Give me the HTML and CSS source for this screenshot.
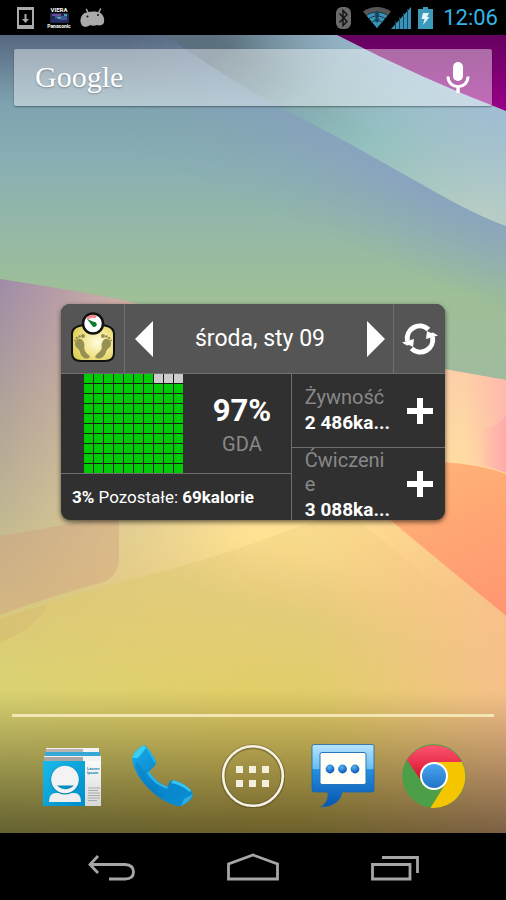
FILE: index.html
```
<!DOCTYPE html>
<html lang="pl">
  <head>
    <meta charset="UTF-8">
    <meta name="viewport" content="width=device-width, initial-scale=1">
    <title>Home</title>
    <link rel="stylesheet" href="styles.css">
  </head>
  <body>
    <header class="status-bar">
      <svg class="status-icon" width="17" height="24" viewBox="0 0 17 24" aria-hidden="true">
        <path d="M0 1h17v22H0zM2 4v15h13V4z" fill="#aaa" fill-rule="evenodd"/>
        <path d="M7.500 8h2v5h2.500l-3.500 4-3.500-4h2.500z" fill="#aaa"/>
      </svg>
      <span class="status-viera">
        <span class="viera-title">VIERA</span>
        <svg width="19" height="10" viewBox="0 0 19 10" aria-hidden="true">
          <rect width="19" height="10" fill="#20264a"/>
          <path d="M2 1h9v2H2z" fill="#6b4f94"/>
          <path d="M5 3h12v4H5z" fill="#3b5792"/>
          <path d="M7 4h4v2H7zM14 1h3v2h-3z" fill="#47a3ac"/>
          <path d="M1 7l5-2 12 4H2z" fill="#252f69"/>
        </svg>
        <span class="viera-brand">Panasonic</span>
      </span>
      <svg class="status-icon" width="25" height="19" viewBox="0 0 25 19" aria-hidden="true">
        <path d="M6.500 1.500l2 4M20.500 1l-2 4" stroke="#aaa" stroke-width="1.500" stroke-linecap="round"/>
        <path d="M.5 12C1 8 3 5 7 4.500c4-1.500 10-1.500 13.500.5 3.500 2 4.500 8 3 10.500-2 2.500-5 2-6.500 1.500-2 1-5 1-7 0-2 2-6 2.500-8 .500C1 16 .2 14 .5 12z" fill="#aaa"/>
        <circle cx="7.500" cy="8.500" r="1" fill="#111"/>
        <circle cx="18" cy="7" r="1" fill="#111"/>
      </svg>
      <span class="status-spacer"></span>
      <svg class="status-icon icon-bluetooth" width="15" height="22" viewBox="0 0 15 22" aria-hidden="true">
        <rect width="15" height="22" rx="6" fill="#6b6b6b"/>
        <path d="M3.500 6.500l7.500 8-4 4v-15l4 4-7.500 8" fill="none" stroke="#111" stroke-width="1.400"/>
      </svg>
      <svg class="status-icon" width="28" height="21" viewBox="0 0 28 21" aria-hidden="true">
        <path d="M14 21L0 4.500C8-1.500 20-1.500 28 4.500z" fill="#555"/>
        <path d="M14 21L3.500 8.500C9 4 19 4 24.500 8.500z" fill="#3793b8"/>
        <path d="M3.500 8.500C9 4 19 4 24.500 8.500M5.500 12c5-4 12-4 17 0M8.500 15.500c3.500-2.500 7.500-2.500 11 0" fill="none" stroke="#12384a"/>
        <path d="M14 4l3 4h-1.500v4H17l-3 4-3-4h1.500V8H11z" fill="#12384a" opacity=".8"/>
      </svg>
      <svg class="status-icon" width="20" height="22" viewBox="0 0 20 22" aria-hidden="true">
        <path d="M0 22L20 0v22z" fill="#3793b8"/>
        <path d="M4.500 14v8M8.500 10v12M12.500 6v16M16.500 2v20" stroke="#174459" stroke-width="1"/>
      </svg>
      <svg class="status-icon icon-battery" width="15" height="22" viewBox="0 0 15 22" aria-hidden="true">
        <path d="M5 0h5v2h5v20H0V2h5z" fill="#3c9abb"/>
        <path d="M5 6h6L9 10h2.500L5 18l1.500-6H3.500z" fill="#e6f4fa"/>
      </svg>
      <time class="clock">12:06</time>
    </header>

    <main class="home">
      <svg class="wallpaper" viewBox="0 35 506 798" preserveAspectRatio="none" aria-hidden="true">
        <defs>
          <linearGradient id="sky" x1="0" y1="35" x2="0" y2="380" gradientUnits="userSpaceOnUse">
            <stop offset="0" stop-color="#56677f"/>
            <stop offset=".2" stop-color="#7fa3b0"/>
            <stop offset=".38" stop-color="#8aafb3"/>
            <stop offset=".58" stop-color="#95b9a6"/>
            <stop offset=".75" stop-color="#9ebf97"/>
            <stop offset="1" stop-color="#a0bb9e"/>
          </linearGradient>
          <linearGradient id="sky-blue" x1="440" y1="190" x2="405" y2="270" gradientUnits="userSpaceOnUse">
            <stop offset="0" stop-color="#889fc4"/>
            <stop offset="1" stop-color="#889fc4" stop-opacity="0"/>
          </linearGradient>
          <linearGradient id="sky-fade" x1="120" y1="0" x2="420" y2="0" gradientUnits="userSpaceOnUse">
            <stop offset="0" stop-color="#fff" stop-opacity="0"/>
            <stop offset="1" stop-color="#fff" stop-opacity=".8"/>
          </linearGradient>
          <mask id="sky-mask">
            <rect y="35" width="506" height="360" fill="url(#sky-fade)"/>
          </mask>
          <linearGradient id="ray" x1="240" y1="35" x2="430" y2="260" gradientUnits="userSpaceOnUse">
            <stop offset="0" stop-color="#5c7180"/>
            <stop offset=".3" stop-color="#84aab0"/>
            <stop offset=".55" stop-color="#93c0bf"/>
            <stop offset="1" stop-color="#b8cdc4"/>
          </linearGradient>
          <linearGradient id="ray-blue" x1="430" y1="180" x2="490" y2="90" gradientUnits="userSpaceOnUse">
            <stop offset="0" stop-color="#a0bcd6" stop-opacity="0"/>
            <stop offset="1" stop-color="#a0bcd6"/>
          </linearGradient>
          <linearGradient id="violet" x1="0" y1="35" x2="0" y2="110" gradientUnits="userSpaceOnUse">
            <stop offset="0" stop-color="#66005f"/>
            <stop offset="1" stop-color="#990088"/>
          </linearGradient>
          <linearGradient id="sand" x1="0" y1="279" x2="0" y2="833" gradientUnits="userSpaceOnUse">
            <stop offset="0" stop-color="#a08ca8"/>
            <stop offset=".22" stop-color="#b0a29a"/>
            <stop offset=".4" stop-color="#beb494"/>
            <stop offset=".6" stop-color="#d6c884"/>
            <stop offset=".74" stop-color="#d8d77c"/>
            <stop offset="1" stop-color="#b9bd5e"/>
          </linearGradient>
          <linearGradient id="sun" x1="0" y1="370" x2="0" y2="833" gradientUnits="userSpaceOnUse">
            <stop offset="0" stop-color="#fdcfa8"/>
            <stop offset=".2" stop-color="#ffdca2"/>
            <stop offset=".36" stop-color="#ffe292"/>
            <stop offset=".5" stop-color="#f3d183"/>
            <stop offset=".7" stop-color="#e1cd69"/>
            <stop offset="1" stop-color="#d4b64b"/>
          </linearGradient>
          <linearGradient id="sun-fade" x1="0" y1="0" x2="250" y2="0" gradientUnits="userSpaceOnUse">
            <stop offset="0" stop-color="#fff" stop-opacity="0"/>
            <stop offset="1" stop-color="#fff"/>
          </linearGradient>
          <mask id="sun-mask">
            <rect y="35" width="506" height="798" fill="url(#sun-fade)"/>
          </mask>
          <linearGradient id="meadow" x1="260" y1="545" x2="220" y2="690" gradientUnits="userSpaceOnUse">
            <stop offset="0" stop-color="#e8c97c" stop-opacity=".3"/>
            <stop offset=".4" stop-color="#dcca76" stop-opacity=".7"/>
            <stop offset="1" stop-color="#dfcc64" stop-opacity=".4"/>
          </linearGradient>
          <linearGradient id="coral" x1="430" y1="460" x2="506" y2="610" gradientUnits="userSpaceOnUse">
            <stop offset="0" stop-color="#ffb377"/>
            <stop offset="1" stop-color="#ff9670"/>
          </linearGradient>
          <linearGradient id="pink-glow" x1="465" y1="0" x2="506" y2="0" gradientUnits="userSpaceOnUse">
            <stop offset="0" stop-color="#ffb9a8" stop-opacity="0"/>
            <stop offset="1" stop-color="#ffb9ae"/>
          </linearGradient>
          <linearGradient id="pink" x1="480" y1="0" x2="506" y2="0" gradientUnits="userSpaceOnUse">
            <stop offset="0" stop-color="#ffa6aa" stop-opacity="0"/>
            <stop offset="1" stop-color="#ffa6aa"/>
          </linearGradient>
          <linearGradient id="peach" x1="310" y1="0" x2="520" y2="0" gradientUnits="userSpaceOnUse">
            <stop offset="0" stop-color="#fcc686" stop-opacity="0"/>
            <stop offset="1" stop-color="#f8bf8c"/>
          </linearGradient>
          <linearGradient id="shade" x1="0" y1="690" x2="0" y2="833" gradientUnits="userSpaceOnUse">
            <stop offset="0" stop-opacity="0"/>
            <stop offset="1" stop-opacity=".5"/>
          </linearGradient>
        </defs>
        <rect y="35" width="506" height="360" fill="url(#sky)"/>
        <rect y="35" width="506" height="360" fill="url(#sky-blue)" mask="url(#sky-mask)"/>
        <path d="M165 35Q225 78 290 112L350 144L430 189Q475 215 506 226V35z" fill="url(#ray)"/>
        <path d="M165 35Q225 78 290 112L350 144L430 189Q475 215 506 226V35z" fill="url(#ray-blue)"/>
        <path d="M337 35Q420 78 506 111V35z" fill="url(#violet)"/>
        <path d="M0 279Q60 288 123 300Q300 345 445 369L506 380V833H0z" fill="url(#sand)"/>
        <path d="M0 279Q60 288 123 300Q300 345 445 369L506 380V833H0z" fill="url(#sun)" mask="url(#sun-mask)"/>
        <path d="M0 536Q70 525 119 512V560Q118 575 104 582Q50 596 0 615z" fill="#cf987f" opacity=".36"/>
        <path d="M0 618L48 604Q35 630 0 642z" fill="#c9957c" opacity=".28"/>
        <path d="M0 617Q60 598 120 582Q180 568 240 548L345 510L506 640V833H0z" fill="url(#meadow)"/>
        <path d="M460 372L506 380V473Q480 464 460 463z" fill="url(#pink-glow)"/>
        <path d="M480 432Q500 425 506 415V473L480 463z" fill="url(#pink)" opacity=".7"/>
        <path d="M440 462Q480 464 506 474V616Q450 570 390 520z" fill="url(#coral)"/>
        <path d="M300 519H390Q450 570 506 616V833H300z" fill="url(#peach)"/>
        <rect y="690" width="506" height="143" fill="url(#shade)"/>
      </svg>

      <div class="search-bar">
        <a class="search-logo" href="#">Google</a>
        <button class="voice-button" type="button" aria-label="Voice search">
          <svg width="24" height="34" viewBox="0 0 24 34" aria-hidden="true">
            <rect x="7" y="1" width="10" height="19" rx="5" fill="#fff"/>
            <path d="M2 15.500C2 29 22 29 22 15.500" fill="none" stroke="#fff" stroke-width="3"/>
            <path d="M10.300 25h3.400v7h-3.400z" fill="#fff"/>
          </svg>
        </button>
      </div>

      <section class="widget">
        <div class="widget-head">
          <button class="widget-app" type="button" aria-label="Waga">
            <svg width="46" height="54" viewBox="0 0 46 54" aria-hidden="true">
              <defs>
                <radialGradient id="scale-body" cx=".6" cy=".5" r=".65">
                  <stop offset="0" stop-color="#fffce0"/>
                  <stop offset=".55" stop-color="#f1e58b"/>
                  <stop offset="1" stop-color="#dccd52"/>
                </radialGradient>
              </defs>
              <path d="M9 14Q23 10 37 14Q44 16 44 22V41Q44 49 35 49H11Q2 49 2 41V22Q2 16 9 14z" fill="url(#scale-body)" stroke="#111" stroke-width="2"/>
              <circle cx="23" cy="11.500" r="10" fill="#fff" stroke="#111" stroke-width="2.500"/>
              <path d="M17 6.500Q22 3 26 5" fill="none" stroke="#f2888b" stroke-width="3"/>
              <path d="M17 7l7 3a2.500 2.500 0 1 1-2 3.500z" fill="#087b2f"/>
              <g fill="#969052">
                <path d="M5 32C5 27 11 25 13 29C16 33 13 35 15 39C17 43 22 44 19 46C14 48 11 44 10 40C9 36 5 36 5 32z"/>
                <path d="M41 32C41 27 35 25 33 29C30 33 33 35 31 38C29 41 23 44 26 46C31 48 35 44 36 40C37 36 41 36 41 32z"/>
                <circle cx="13" cy="24" r="2"/><circle cx="9.500" cy="24.500" r="1.300"/><circle cx="6.800" cy="26" r="1.200"/><circle cx="5" cy="28.500" r="1"/>
                <circle cx="33" cy="24" r="2"/><circle cx="36.500" cy="24.500" r="1.300"/><circle cx="39.200" cy="26" r="1.200"/><circle cx="41" cy="28.500" r="1"/>
              </g>
            </svg>
          </button>
          <div class="widget-date">
            <button class="arrow" type="button" aria-label="Poprzedni">
              <svg width="18" height="36" viewBox="0 0 18 36" aria-hidden="true"><path d="M18 0v36L0 18z" fill="#fff"/></svg>
            </button>
            <span>środa, sty 09</span>
            <button class="arrow" type="button" aria-label="Następny">
              <svg width="18" height="36" viewBox="0 0 18 36" aria-hidden="true"><path d="M0 0v36l18-18z" fill="#fff"/></svg>
            </button>
          </div>
          <button class="widget-refresh" type="button" aria-label="Odśwież">
            <svg width="36" height="34" viewBox="0 0 36 32" aria-hidden="true">
              <path d="M5.500 18A12.500 12.500 0 0 1 26.500 6.500" fill="none" stroke="#fff" stroke-width="5"/>
              <path d="M30.500 14A12.500 12.500 0 0 1 9.500 25.500" fill="none" stroke="#fff" stroke-width="5"/>
              <path d="M0 19.500l12-3.500-1 8-4-2-2 .5z" fill="#fff"/>
              <path d="M36 12.500L24 16l1-8 4 2 2-.5z" fill="#fff"/>
            </svg>
          </button>
        </div>

        <div class="widget-body">
          <div class="summary">
            <div class="gda">
              <svg class="gda-grid" width="100" height="99" viewBox="0 0 100 99" role="img" aria-label="97%">
                <defs>
                  <pattern id="cell" width="10" height="10" patternUnits="userSpaceOnUse">
                    <rect width="10" height="10" fill="#191b19"/>
                    <rect width="9" height="9" fill="#00cc05"/>
                  </pattern>
                  <pattern id="cell-empty" width="10" height="10" patternUnits="userSpaceOnUse">
                    <rect width="10" height="10" fill="#191b19"/>
                    <rect width="9" height="9" fill="#ccc"/>
                  </pattern>
                </defs>
                <rect width="99" height="99" fill="url(#cell)"/>
                <rect x="70" width="29" height="10" fill="url(#cell-empty)"/>
              </svg>
              <div class="gda-text">
                <strong class="gda-value">97%</strong>
                <span class="gda-label">GDA</span>
              </div>
            </div>
            <p class="remaining"><b>3%</b> Pozostałe: <b>69kalorie</b></p>
          </div>
          <div class="entries">
            <div class="entry">
              <div class="entry-text">
                <span class="entry-label">Żywność</span>
                <strong class="entry-value">2 486ka...</strong>
              </div>
              <button class="add-button" type="button" aria-label="Dodaj żywność">
                <svg width="26" height="26" viewBox="0 0 26 26" aria-hidden="true"><path d="M10 0h6v10h10v6H16v10h-6V16H0v-6h10z" fill="#fff"/></svg>
              </button>
            </div>
            <div class="entry">
              <div class="entry-text">
                <span class="entry-label">Ćwiczenie</span>
                <strong class="entry-value">3 088ka...</strong>
              </div>
              <button class="add-button" type="button" aria-label="Dodaj ćwiczenie">
                <svg width="26" height="26" viewBox="0 0 26 26" aria-hidden="true"><path d="M10 0h6v10h10v6H16v10h-6V16H0v-6h10z" fill="#fff"/></svg>
              </button>
            </div>
          </div>
        </div>
      </section>

      <nav class="dock">
        <a href="#" aria-label="Kontakty">
          <svg width="64" height="64" viewBox="0 0 64 64" aria-hidden="true">
            <defs>
              <linearGradient id="card-blue" x1="0" y1="0" x2="1" y2="1">
                <stop offset="0" stop-color="#19bae8"/>
                <stop offset="1" stop-color="#008cc9"/>
              </linearGradient>
              <linearGradient id="paper" x1="0" y1="0" x2="0" y2="1">
                <stop offset="0" stop-color="#fafafa"/>
                <stop offset="1" stop-color="#d8d8d8"/>
              </linearGradient>
            </defs>
            <path d="M6 4h53v4H6z" fill="#f2f2f2"/>
            <path d="M6 5h37v3H6z" fill="#bab4b0"/>
            <path d="M5 8h55v4H5z" fill="#37a7d6"/>
            <path d="M4 12h57v5H4z" fill="#f2f2f2"/>
            <path d="M4 13h39v4H4z" fill="#aaa5a2"/>
            <path d="M3 17h42v45H3z" fill="url(#card-blue)"/>
            <path d="M45 17h16v45H45z" fill="url(#paper)"/>
            <path d="M9 58Q9 49 16 49H34Q41 49 41 58z" fill="#eee"/>
            <circle cx="25" cy="36" r="14.500" fill="#0787b8"/>
            <circle cx="25" cy="35.500" r="13.800" fill="#f3f3f3"/>
            <path d="M17 41.500h17Q25.500 49 17 41.500z" fill="#078dbd"/>
            <path d="M48 44h12M48 46.500h10M48 49h12M48 51.500h12M48 54h12M48 56.500h9" stroke="#aaa"/>
            <text class="card-text" x="47" y="26">Lauren</text>
            <text class="card-text" x="47" y="30">Ipsum</text>
          </svg>
        </a>
        <a href="#" aria-label="Telefon">
          <svg width="64" height="64" viewBox="0 0 64 64" aria-hidden="true">
            <defs>
              <linearGradient id="phone" x1="0" y1="0" x2="1" y2="1">
                <stop offset="0" stop-color="#18aeea"/>
                <stop offset=".5" stop-color="#0783c8"/>
                <stop offset="1" stop-color="#0a8fd4"/>
              </linearGradient>
            </defs>
            <path d="M1 14Q3 6 13 1Q16 2 25 17Q26 22 18 27Q24 38 37 43Q38 36 42 36Q51 38 60 46L62 51Q60 58 50 62H46Q30 58 16 43Q2 28 1 14z" fill="url(#phone)"/>
            <path d="M1 14Q4 6 13 1L15 4L7 14z" fill="#39cef4"/>
            <path d="M13 1Q17 3 25 17L24 20L15 4z" fill="#20b3e9"/>
            <path d="M42 36Q51 38 60 46L59 48Q49 40 40 39z" fill="#35c6f2"/>
            <path d="M18 27Q24 38 37 43L36 45Q22 40 16 29z" fill="#2eb4e8"/>
            <path d="M62 50Q60 57 50 62L53 55z" fill="#28aee5"/>
            <path d="M6 18L14 28Q12 32 18 40T33 52L30 54Q10 41 4 22z" fill="#0a76b8" opacity=".35"/>
          </svg>
        </a>
        <a href="#" aria-label="Aplikacje">
          <svg width="64" height="64" viewBox="0 0 64 64" aria-hidden="true">
            <circle cx="32" cy="32.500" r="29.800" fill="none" stroke="#4d4218" stroke-opacity=".4" stroke-width="5"/>
            <circle cx="32" cy="32" r="29.800" fill="none" stroke="#f5f2e6" stroke-width="2.600"/>
            <path d="M15 22h7v7h-7zM28 22h7v7h-7zM41 22h7v7h-7zM15 36h7v7h-7zM28 36h7v7h-7zM41 36h7v7h-7z" fill="#f3efdc"/>
          </svg>
        </a>
        <a href="#" aria-label="Wiadomości">
          <svg width="64" height="64" viewBox="0 0 64 64" aria-hidden="true">
            <defs>
              <linearGradient id="bubble" x1="0" y1="0" x2="0" y2="64" gradientUnits="userSpaceOnUse">
                <stop offset="0" stop-color="#b8e4fd"/>
                <stop offset=".39" stop-color="#68bdf1"/>
                <stop offset=".4" stop-color="#268fe0"/>
                <stop offset="1" stop-color="#0751ae"/>
              </linearGradient>
              <radialGradient id="dot" cx=".4" cy=".3" r=".7">
                <stop offset="0" stop-color="#57b5f3"/>
                <stop offset="1" stop-color="#0755b5"/>
              </radialGradient>
            </defs>
            <path d="M3 0.500H61Q63 .5 63 2.500V46Q63 48 61 48H31Q29 62 10 63Q18 58 17 48H3Q1 48 1 46V2.500Q1 .5 3 .5z" fill="url(#bubble)" stroke="#1767ab" stroke-width=".8"/>
            <rect x="9" y="8.500" width="46" height="32" rx="2" fill="#fffff8" stroke="#2676b8"/>
            <circle cx="19" cy="25" r="4.400" fill="url(#dot)"/>
            <circle cx="31.500" cy="25" r="4.400" fill="url(#dot)"/>
            <circle cx="44" cy="25" r="4.400" fill="url(#dot)"/>
          </svg>
        </a>
        <a href="#" aria-label="Chrome">
          <svg width="64" height="64" viewBox="0 0 64 64" aria-hidden="true">
            <defs>
              <linearGradient id="red" x1="0" y1="0" x2="0" y2="1">
                <stop offset="0" stop-color="#ff5470"/>
                <stop offset="1" stop-color="#d4102b"/>
              </linearGradient>
              <linearGradient id="chrome-blue" x1="0" y1="0" x2="0" y2="1">
                <stop offset="0" stop-color="#4aa5ef"/>
                <stop offset="1" stop-color="#2274c8"/>
              </linearGradient>
            </defs>
            <circle cx="32" cy="32" r="31.800" fill="#4c9e48"/>
            <path d="M5 16A31.800 31.800 0 0 1 60 18H32L18 35z" fill="url(#red)"/>
            <path d="M32 18H60A31.800 31.800 0 0 1 28.500 63.800L44 39z" fill="#f5c600"/>
            <circle cx="32" cy="32" r="14" fill="#fff"/>
            <circle cx="32" cy="32" r="12" fill="url(#chrome-blue)"/>
          </svg>
        </a>
      </nav>
    </main>

    <footer class="nav-bar">
      <button type="button" aria-label="Wstecz">
        <svg width="52" height="30" viewBox="0 0 52 30" fill="none" stroke="#a6a6a6" stroke-width="2.800" aria-hidden="true">
          <path d="M13 4L5 12.500L13 21M5 12.500H40Q48.500 13 48.500 20T40 27H24"/>
        </svg>
      </button>
      <button type="button" aria-label="Ekran główny">
        <svg width="52" height="30" viewBox="0 0 52 30" fill="none" stroke="#a6a6a6" stroke-width="2.800" aria-hidden="true">
          <path d="M1.500 27V12L26 3L50.500 12V27z"/>
        </svg>
      </button>
      <button type="button" aria-label="Ostatnie aplikacje">
        <svg width="52" height="30" viewBox="0 0 52 30" fill="none" stroke="#a6a6a6" stroke-width="2.800" aria-hidden="true">
          <path d="M3.500 12.500H41V27H3.500zM13 5.500H48.500V21"/>
        </svg>
      </button>
    </footer>
  </body>
</html>
```
FILE: styles.css
```
:root {
  --holo-blue: #33b5e5;
  --line: #6e6e6e;
}
* {
  box-sizing: border-box;
}
body {
  display: flex;
  flex-direction: column;
  min-height: 100vh;
  margin: 0;
  background: black;
  font-family: Roboto, "Noto Sans", sans-serif;
  color: white;
}
button {
  display: flex;
  align-items: center;
  justify-content: center;
  padding: 0;
  border: 0;
  background: none;
  color: inherit;
  font: inherit;
}
svg {
  display: block;
  flex: none;
}

/* status bar */
.status-bar {
  display: flex;
  align-items: center;
  height: 35px;
  padding: 0 8px 0 17px;
}
.status-viera {
  display: flex;
  flex-direction: column;
  align-items: center;
  width: 24px;
  margin: 0 9px 0 13px;
}
.viera-title {
  font-size: 6px;
  font-weight: bold;
  line-height: 6px;
}
.viera-brand {
  font-size: 5px;
  font-weight: bold;
  line-height: 6px;
}
.status-spacer {
  flex: 1;
}
.icon-bluetooth {
  margin-right: 12px;
}
.icon-battery {
  margin: 0 10px 0 7px;
}
.clock {
  color: var(--holo-blue);
  font-size: 22px;
}

/* home screen */
.home {
  position: relative;
  display: flex;
  flex: 1;
  flex-direction: column;
  padding: 14px 14px 0;
}
.wallpaper {
  position: absolute;
  inset: 0;
  z-index: -1;
  width: 100%;
  height: 100%;
}
.search-bar {
  display: flex;
  align-items: center;
  justify-content: space-between;
  height: 57px;
  padding: 0 22px 0 21px;
  border-radius: 2px;
  background: rgba(255, 255, 255, .42);
  box-shadow: 0 1px 2px rgba(0, 0, 0, .4);
}
.search-logo {
  padding-bottom: 2px;
  color: white;
  font-family: "Liberation Serif", serif;
  font-size: 30px;
  text-decoration: none;
  text-shadow: 0 1px 2px rgba(0, 0, 0, .3);
}

/* calorie widget */
.widget {
  margin: 198px 47px 0;
  overflow: hidden;
  border-radius: 9px;
  background: #303030;
  box-shadow: 0 2px 5px rgba(0, 0, 0, .6);
}
.widget-head {
  display: flex;
  height: 70px;
  border-bottom: 1px solid var(--line);
  background: #555;
}
.widget-app {
  width: 64px;
  border-right: 1px solid var(--line);
}
.widget-date {
  display: flex;
  flex: 1;
  align-items: center;
  justify-content: space-between;
  padding: 0 8px 0 10px;
  font-size: 23px;
}
.widget-refresh {
  width: 52px;
  border-left: 1px solid var(--line);
}
.widget-body {
  display: flex;
  height: 146px;
}
.summary {
  flex: 3;
}
.gda {
  display: flex;
  height: 100px;
  padding-left: 23px;
  border-bottom: 1px solid var(--line);
}
.gda-text {
  display: flex;
  flex: 1;
  flex-direction: column;
  align-items: center;
  justify-content: center;
  padding: 4px 0 0 9px;
}
.gda-value {
  font-size: 31px;
  line-height: 36px;
}
.gda-label {
  color: #888;
  font-size: 20px;
  line-height: 30px;
}
.remaining {
  margin: 0;
  padding-left: 11px;
  font-size: 17px;
  line-height: 46px;
}
.entries {
  flex: 2;
  min-width: 0;
  border-left: 1px solid var(--line);
}
.entry {
  display: flex;
  align-items: center;
  justify-content: space-between;
  height: 73px;
  padding: 0 12px 0 13px;
}
.entry + .entry {
  align-items: start;
  border-top: 1px solid var(--line);
}
.entry + .entry .add-button {
  height: 72px;
}
.entry-text {
  width: 88px;
}
.entry-label {
  display: block;
  color: #888;
  font-size: 20px;
  line-height: 24px;
  overflow-wrap: anywhere;
}
.entry-value {
  display: block;
  font-size: 19px;
  line-height: 28px;
  white-space: nowrap;
}

/* dock */
.dock {
  display: flex;
  justify-content: space-around;
  margin: auto -2px 0;
  padding: 27px 15px 25px;
  border-top: 3px solid #f3e5b4;
}
.card-text {
  fill: #1687b4;
  font-size: 4px;
  font-weight: bold;
}

.nav-bar {
  display: flex;
  align-items: center;
  justify-content: center;
  gap: 90px;
  height: 67px;
}
```
